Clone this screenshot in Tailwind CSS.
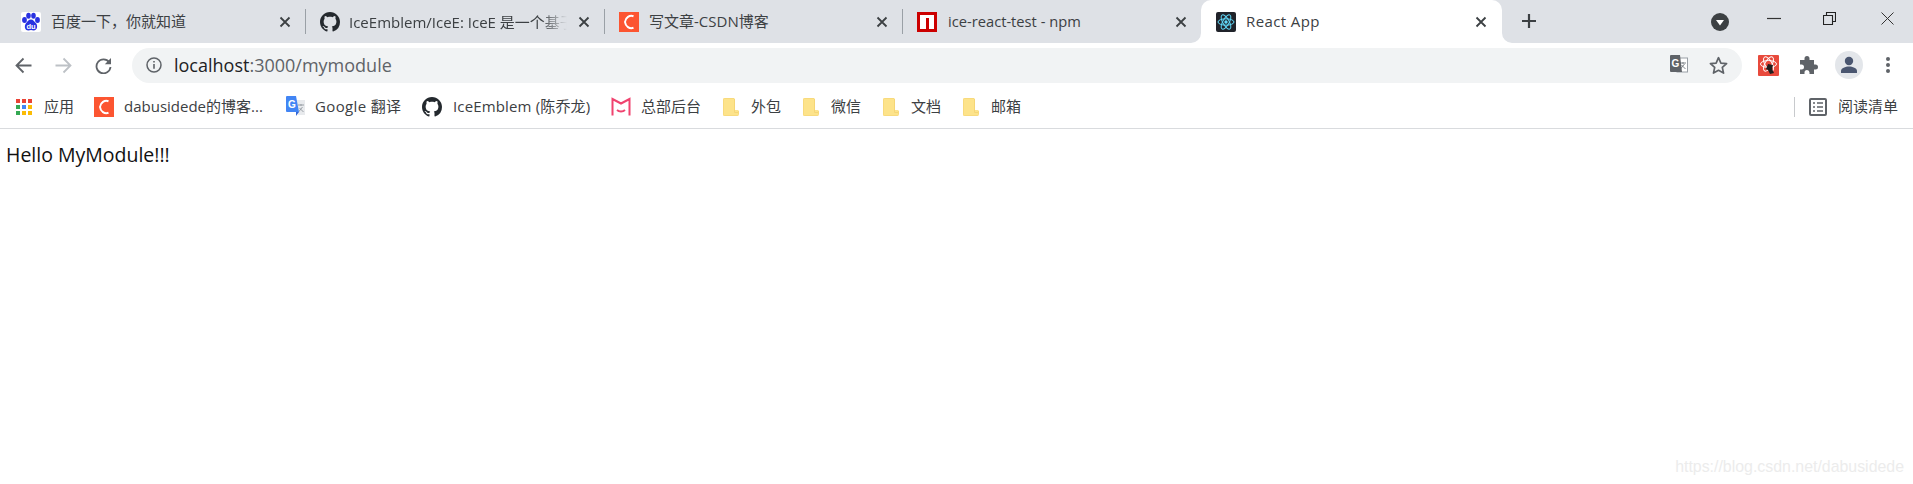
<!DOCTYPE html>
<html lang="zh">
<head>
  <meta charset="UTF-8">
  <title>React App</title>
  <script src="https://cdn.jsdelivr.net/npm/@tailwindcss/browser@4"></script>
</head>
<body class="relative h-[484px] overflow-hidden bg-white font-['Open_Sans','Noto_Sans_CJK_SC',sans-serif]">

  <svg class="hidden">
    <symbol id="close" viewBox="0 0 12 12"><path d="M1.5 1.5l9 9M10.5 1.5l-9 9" stroke="#3c4043" stroke-width="1.8" fill="none"/></symbol>
    <symbol id="github" viewBox="0 0 16 16"><path fill="#24292e" d="M8 0C3.58 0 0 3.58 0 8c0 3.54 2.29 6.53 5.47 7.59.4.07.55-.17.55-.38 0-.19-.01-.82-.01-1.49-2.01.37-2.53-.49-2.69-.94-.09-.23-.48-.94-.82-1.13-.28-.15-.68-.52-.01-.53.63-.01 1.08.58 1.23.82.72 1.21 1.87.87 2.33.66.07-.52.28-.87.51-1.07-1.78-.2-3.64-.89-3.64-3.95 0-.87.31-1.59.82-2.15-.08-.2-.36-1.02.08-2.12 0 0 .67-.21 2.2.82.64-.18 1.32-.27 2-.27.68 0 1.36.09 2 .27 1.53-1.04 2.2-.82 2.2-.82.44 1.1.16 1.92.08 2.12.51.56.82 1.27.82 2.15 0 3.07-1.87 3.75-3.65 3.95.29.25.54.73.54 1.48 0 1.07-.01 1.93-.01 2.2 0 .21.15.46.55.38A8.013 8.013 0 0016 8c0-4.42-3.58-8-8-8z"/></symbol>
    <symbol id="csdn" viewBox="0 0 20 20"><rect width="20" height="20" fill="#fc5531"/><path d="M14.500 4.200A6.500 7 0 0 0 6 10a6.500 7 0 0 0 8.500 5.800" fill="none" stroke="#fff" stroke-width="2"/></symbol>
    <symbol id="folder" viewBox="0 0 16 18"><path d="M1.5 0h9.5l1 1v11h3.500v4.500a1.500 1.500 0 0 1-1.500 1.500H1.500A1.500 1.500 0 0 1 0 16.500V1.500A1.500 1.500 0 0 1 1.500 0z" fill="#fde38a"/><path d="M11.500 1v13.500h3.500" fill="none" stroke="#f5d676"/><path d="M.5 1.500a1 1 0 0 1 1-1h9.500M.5 1.500v15a1 1 0 0 0 1 1h13a1 1 0 0 0 1-1V13" fill="none" stroke="#f8da7c"/></symbol>
  </svg>

  <!-- Tab strip -->
  <div class="flex h-[43px] bg-[#dee1e6] pl-[10px] text-[15px] text-[#3c4043]">
    <div class="flex w-[299px] shrink-0 items-center pl-[11px] pr-[18px] relative">
      <svg class="h-5 w-5 shrink-0" viewBox="0 0 20 20">
        <rect width="20" height="20" rx="2" fill="#fff"/>
        <g fill="#2932e1"><ellipse cx="3.500" cy="8" rx="2.400" ry="3"/><ellipse cx="7.500" cy="3.800" rx="2.300" ry="3"/><ellipse cx="12.500" cy="3.800" rx="2.300" ry="3"/><ellipse cx="16.500" cy="8" rx="2.400" ry="3"/><path d="M10 7.500c2.200 0 3.200 2 5 3.800s1.800 7.200-2.500 7.200c-1 0-1.500-.4-2.500-.4s-1.500.4-2.500.4C3.200 18.500 3.200 13.500 5 11.300s2.800-3.800 5-3.800z"/></g>
        <text x="10" y="16.500" text-anchor="middle" font-size="7.500" font-weight="700" fill="#fff" font-family="Liberation Sans">du</text>
      </svg>
      <span class="ml-[10px] flex-1 overflow-hidden whitespace-nowrap">百度一下，你就知道</span>
      <svg class="h-3 w-3 shrink-0"><use href="#close"/></svg>
      <i class="absolute right-[3px] top-[9px] h-[25px] w-px bg-[#9aa0a6]"></i>
    </div>
    <div class="flex w-[299px] shrink-0 items-center pl-[11px] pr-[18px] relative">
      <svg class="h-5 w-5 shrink-0"><use href="#github"/></svg>
      <span class="ml-[9px] mr-[10px] h-[22px] w-[218px] overflow-hidden whitespace-nowrap leading-[22px] [mask-image:linear-gradient(to_right,black_88%,transparent)]">IceEmblem/IceE: IceE 是一个基于</span>
      <svg class="ml-auto h-3 w-3 shrink-0"><use href="#close"/></svg>
      <i class="absolute right-[3px] top-[9px] h-[25px] w-px bg-[#9aa0a6]"></i>
    </div>
    <div class="flex w-[298px] shrink-0 items-center pl-[11px] pr-[18px] relative">
      <svg class="h-5 w-5 shrink-0"><use href="#csdn"/></svg>
      <span class="ml-[10px] flex-1 overflow-hidden whitespace-nowrap">写文章-CSDN博客</span>
      <svg class="h-3 w-3 shrink-0"><use href="#close"/></svg>
      <i class="absolute right-[3px] top-[9px] h-[25px] w-px bg-[#9aa0a6]"></i>
    </div>
    <div class="flex w-[295px] shrink-0 items-center pl-[11px] pr-[14px] text-[14.7px]">
      <svg class="h-5 w-5 shrink-0" viewBox="0 0 20 20"><rect width="20" height="20" fill="#c00"/><path d="M3 3h14v14h-5V6H9v11H3z" fill="#fff"/></svg>
      <span class="ml-[11px] flex-1 overflow-hidden whitespace-nowrap">ice-react-test - npm</span>
      <svg class="h-3 w-3 shrink-0"><use href="#close"/></svg>
    </div>
    <!-- Active tab -->
    <div class="relative flex w-[301px] shrink-0 items-center rounded-t-[10px] bg-white pl-[15px] pr-[15px] text-[#3c4043]">
      <svg class="absolute bottom-0 left-[-10px] h-[10px] w-[10px]" viewBox="0 0 10 10"><path d="M10 0v10H0a10 10 0 0 0 10-10z" fill="#fff"/></svg>
      <svg class="h-5 w-5 shrink-0" viewBox="0 0 20 20">
        <rect width="20" height="20" rx="2" fill="#20232a"/>
        <g fill="none" stroke="#61dafb" stroke-width="1"><ellipse cx="10" cy="10" rx="8" ry="3.200"/><ellipse cx="10" cy="10" rx="8" ry="3.200" transform="rotate(60 10 10)"/><ellipse cx="10" cy="10" rx="8" ry="3.200" transform="rotate(120 10 10)"/></g>
        <circle cx="10" cy="10" r="1.700" fill="#61dafb"/>
      </svg>
      <span class="ml-[10px] flex-1 overflow-hidden whitespace-nowrap tracking-[0.4px]">React App</span>
      <svg class="h-3 w-3 shrink-0"><use href="#close"/></svg>
      <svg class="absolute bottom-0 right-[-10px] h-[10px] w-[10px]" viewBox="0 0 10 10"><path d="M0 0v10h10A10 10 0 0 1 0 0z" fill="#fff"/></svg>
    </div>
    <svg class="ml-[19px] mt-[13px] h-4 w-4 shrink-0" viewBox="0 0 16 16"><path d="M8 1v14M1 8h14" stroke="#3c4043" stroke-width="2.200"/></svg>
    <div class="ml-auto flex">
      <svg class="mr-[38px] mt-[13px] h-[18px] w-[18px]" viewBox="0 0 18 18"><circle cx="9" cy="9" r="9" fill="#3c4043"/><path d="M5 7h8l-4 5.500z" fill="#fff"/></svg>
      <svg class="mr-[42px] mt-[12px] h-3 w-[14px]" viewBox="0 0 14 12"><path d="M0 6.500h14" stroke="#333" stroke-width="1.200"/></svg>
      <svg class="mr-[45px] mt-[12px] h-[13px] w-[13px]" viewBox="0 0 13 13"><path d="M.5 3.500h9v9h-9zM3.500 3.500v-3h9v9h-3" fill="none" stroke="#222" stroke-width="1.100"/></svg>
      <svg class="mr-[19px] mt-[12px] h-[13px] w-[13px]" viewBox="0 0 13 13"><path d="M.5.5l12 12M12.500.5l-12 12" stroke="#333" stroke-width="1"/></svg>
    </div>
  </div>

  <!-- Toolbar -->
  <div class="flex h-[44px] items-center bg-white">
    <svg class="ml-[15px] h-[17px] w-[17px]" viewBox="0 0 17 17"><path d="M16.500 8.500H1.800M8.500 1.500l-7 7 7 7" fill="none" stroke="#5f6368" stroke-width="1.800"/></svg>
    <svg class="ml-[23px] h-[17px] w-[17px]" viewBox="0 0 17 17"><path d="M.5 8.500h14.700M8.500 1.500l7 7-7 7" fill="none" stroke="#bdc1c6" stroke-width="1.800"/></svg>
    <svg class="ml-[23px] h-[17px] w-[17px]" viewBox="0 0 17 17"><path d="M14.200 5.200A7 7 0 1 0 15.500 10" fill="none" stroke="#5f6368" stroke-width="1.800"/><path d="M16 1v6.200H9.800z" fill="#5f6368"/></svg>
    <div class="ml-[20px] flex h-[35px] w-[1610px] items-center rounded-full bg-[#f1f3f4]">
      <svg class="ml-[14px] h-4 w-4 shrink-0" viewBox="0 0 16 16"><circle cx="8" cy="8" r="7" fill="none" stroke="#5f6368" stroke-width="1.500"/><path d="M7.200 7h1.600v4.800H7.200zM7.200 4h1.600v1.600H7.200z" fill="#5f6368"/></svg>
      <span class="ml-[12px] text-[18px] text-[#202124]">localhost<span class="text-[#5f6368]">:3000/mymodule</span></span>
      <svg class="ml-auto h-[20px] w-[18px] shrink-0" viewBox="0 0 18 20"><rect x="7" y="3" width="10.500" height="14" fill="#fff" stroke="#9aa0a6"/><path d="M10 8h6M13 7v2M10.500 14l4-5M11.500 10l4 4" stroke="#80868b" fill="none"/><path d="M1 0h9l2 17H1a1 1 0 0 1-1-1V1a1 1 0 0 1 1-1z" fill="#5f6368"/><text x="5.500" y="12" text-anchor="middle" font-size="10" font-weight="700" fill="#fff" font-family="Liberation Sans">G</text></svg>
      <svg class="ml-[21px] mr-[14px] h-[19px] w-[19px] shrink-0" viewBox="0 0 20 20"><path d="M10 1.800l2.500 5.600 6 .6-4.500 4 1.300 6L10 15.100 4.700 18l1.300-6-4.500-4 6-.6z" fill="none" stroke="#5f6368" stroke-width="1.800" stroke-linejoin="round"/></svg>
    </div>
    <svg class="ml-[16px] h-[21px] w-[21px] shrink-0" viewBox="0 0 21 21">
      <rect width="21" height="21" rx="1" fill="#e84a3c"/>
      <g fill="none" stroke="#fff" stroke-width="1"><ellipse cx="10.500" cy="9" rx="8" ry="3.500"/><ellipse cx="10.500" cy="9" rx="8" ry="3.500" transform="rotate(60 10.500 9)"/><ellipse cx="10.500" cy="9" rx="8" ry="3.500" transform="rotate(120 10.500 9)"/></g>
      <path d="M10 9l5 1-1 4 2 4-4 1-2-4-2-1z" fill="#1f1f1f"/>
    </svg>
    <svg class="ml-[21px] h-[18px] w-[18px] shrink-0" viewBox="0 0 18 18"><path d="M7 0a2.500 2.500 0 0 1 2.500 2.500V4H14v4.500h1.500a2.500 2.500 0 0 1 0 5H14V18H9.500v-1.500a2.500 2.500 0 0 0-5 0V18H0v-4.500h1.500a2.500 2.500 0 0 0 0-5H0V4h4.500V2.500A2.500 2.500 0 0 1 7 0z" fill="#5f6368"/></svg>
    <div class="ml-[17px] flex h-7 w-7 shrink-0 items-center justify-center rounded-full bg-[#e3e6ea]">
      <svg class="h-[18px] w-[18px]" viewBox="0 0 18 18"><circle cx="9" cy="5" r="4.200" fill="#4a5670"/><path d="M1 17v-2c0-3 4.500-4.500 8-4.500s8 1.500 8 4.500v2z" fill="#4a5670"/></svg>
    </div>
    <svg class="ml-[23px] h-4 w-1 shrink-0" viewBox="0 0 4 16"><circle cx="2" cy="2" r="2" fill="#5f6368"/><circle cx="2" cy="8" r="2" fill="#5f6368"/><circle cx="2" cy="14" r="2" fill="#5f6368"/></svg>
  </div>

  <!-- Bookmarks bar -->
  <div class="flex h-[42px] items-center border-b border-[#d9dbde] bg-white pb-[2px] pl-[16px] text-[15px] text-[#3c4043]">
    <svg class="h-4 w-4 shrink-0" viewBox="0 0 16 16">
      <rect width="4" height="4" fill="#ea4335"/><rect x="6" width="4" height="4" fill="#ea4335"/><rect x="12" width="4" height="4" fill="#ea4335"/>
      <rect y="6" width="4" height="4" fill="#34a853"/><rect x="6" y="6" width="4" height="4" fill="#4285f4"/><rect x="12" y="6" width="4" height="4" fill="#fbbc05"/>
      <rect y="12" width="4" height="4" fill="#34a853"/><rect x="6" y="12" width="4" height="4" fill="#fbbc05"/><rect x="12" y="12" width="4" height="4" fill="#fbbc05"/>
    </svg>
    <span class="ml-[12px] w-[50px]">应用</span>
    <svg class="h-5 w-5 shrink-0"><use href="#csdn"/></svg>
    <span class="ml-[10px] w-[162px] whitespace-nowrap">dabusidede的博客...</span>
    <svg class="h-[22px] w-[20px] shrink-0" viewBox="0 0 20 22"><path d="M9 4h10v15H12z" fill="#e8eaed"/><path d="M12 9h6M15 8v2M12.500 16l4-5M13.500 12l4 4" stroke="#9aa0a6" fill="none"/><path d="M1 0h9l3 16H1a1 1 0 0 1-1-1V1a1 1 0 0 1 1-1z" fill="#4285f4"/><path d="M10 16h3l-3 4z" fill="#3367d6"/><text x="6" y="12" text-anchor="middle" font-size="10" font-weight="700" fill="#fff" font-family="Liberation Sans">G</text></svg>
    <span class="ml-[9px] w-[107px] whitespace-nowrap tracking-[0.35px]">Google 翻译</span>
    <svg class="h-5 w-5 shrink-0"><use href="#github"/></svg>
    <span class="ml-[11px] w-[158px] whitespace-nowrap tracking-[0.15px]">IceEmblem (陈乔龙)</span>
    <svg class="h-5 w-5 shrink-0" viewBox="0 0 20 20"><path d="M1.500 18.500V2L10 6.500 18.500 2v16.500" fill="none" stroke="#f0436f" stroke-width="2"/><path d="M6 13c2 2 6 2 8 0" fill="none" stroke="#f0436f" stroke-width="1.800"/></svg>
    <span class="ml-[10px] w-[82px] whitespace-nowrap">总部后台</span>
    <svg class="h-[18px] w-4 shrink-0"><use href="#folder"/></svg>
    <span class="ml-[12px] w-[52px] whitespace-nowrap">外包</span>
    <svg class="h-[18px] w-4 shrink-0"><use href="#folder"/></svg>
    <span class="ml-[12px] w-[52px] whitespace-nowrap">微信</span>
    <svg class="h-[18px] w-4 shrink-0"><use href="#folder"/></svg>
    <span class="ml-[12px] w-[52px] whitespace-nowrap">文档</span>
    <svg class="h-[18px] w-4 shrink-0"><use href="#folder"/></svg>
    <span class="ml-[12px] whitespace-nowrap">邮箱</span>
    <div class="ml-auto flex items-center pr-[15px]">
      <i class="h-5 w-px bg-[#c8cacd]"></i>
      <svg class="ml-[14px] h-[18px] w-[18px] shrink-0" viewBox="0 0 18 18"><rect x="1" y="1" width="16" height="16" rx="1" fill="none" stroke="#5f6368" stroke-width="2"/><path d="M4 5h2M8 5h6M4 9h2M8 9h6M4 13h2M8 13h6" stroke="#5f6368" stroke-width="1.500"/></svg>
      <span class="ml-[11px] whitespace-nowrap">阅读清单</span>
    </div>
  </div>

  <!-- Page -->
  <p class="pl-[6px] pt-[13px] text-[19.5px] leading-[26px] text-[#111]">Hello MyModule!!!</p>

  <!-- Watermark -->
  <span class="absolute right-[9px] top-[457px] font-['Liberation_Sans',sans-serif] text-[15.9px] leading-[20px] text-[#ececec]">https://blog.csdn.net/dabusidede</span>
</body>
</html>
